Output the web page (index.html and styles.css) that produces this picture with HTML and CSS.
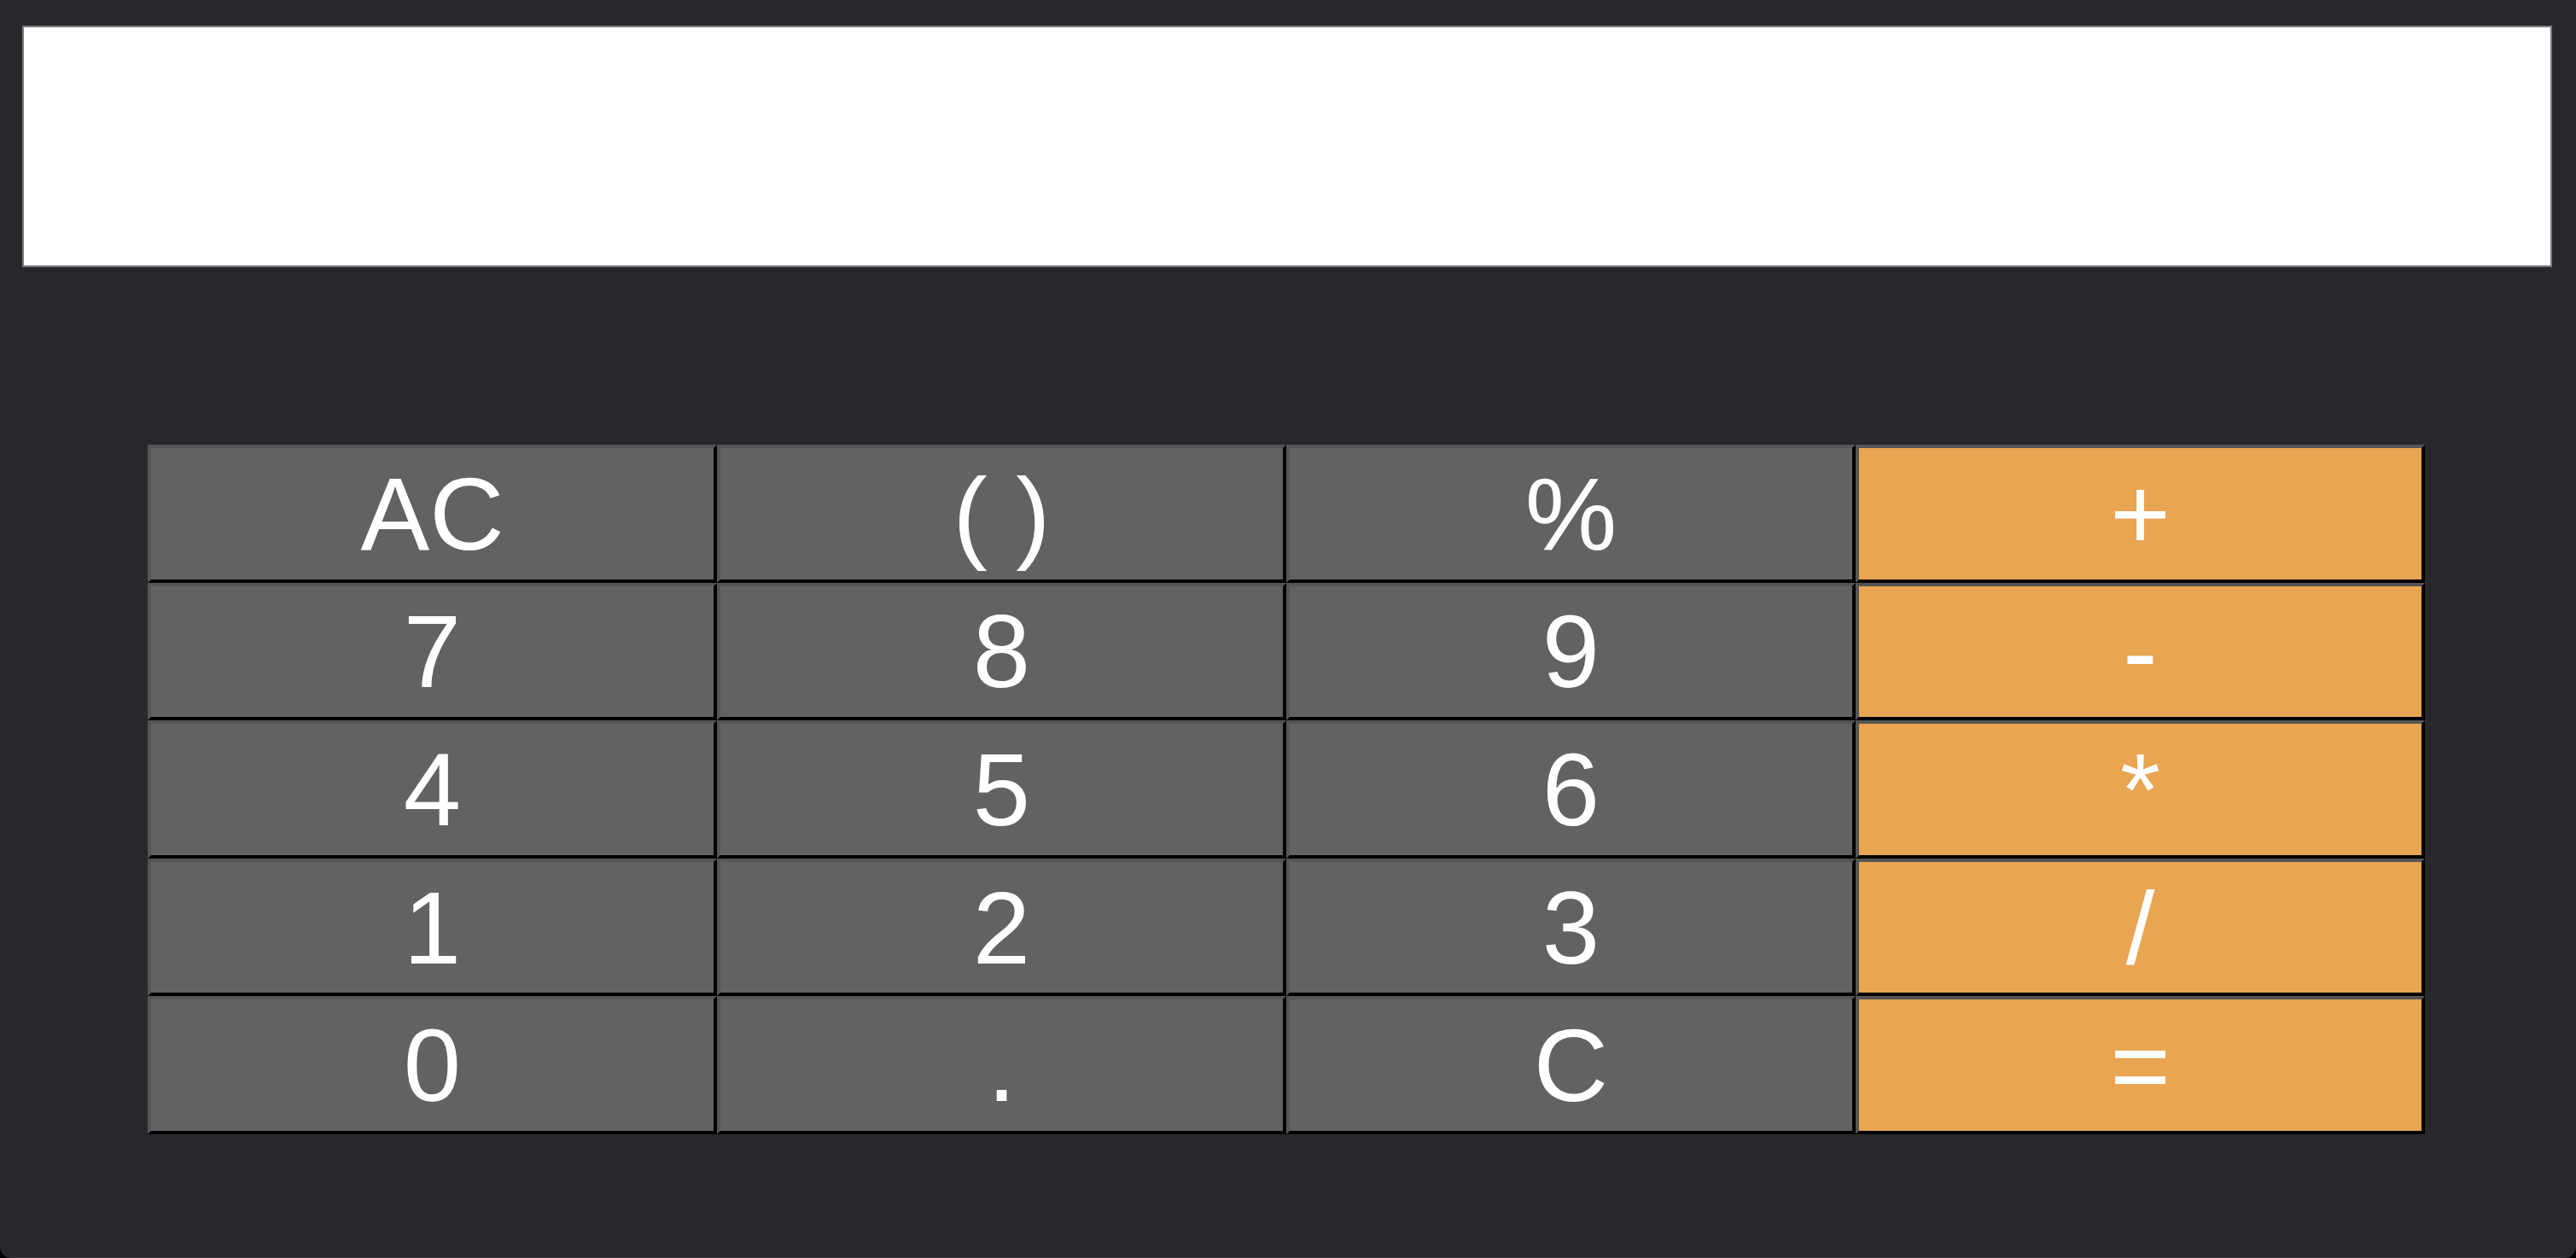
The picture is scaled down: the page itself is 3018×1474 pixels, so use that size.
FILE: index.html
```html
<!DOCTYPE html>
<html>
<head>
<meta charset="utf-8">
<title>Calculator</title>
<link rel="stylesheet" href="styles.css">
</head>
<body>
<div class="calc">
  <input class="display" type="text" value="">
  <div class="keys">
    <button class="key">AC</button>
    <button class="key">( )</button>
    <button class="key">%</button>
    <button class="key op">+</button>
    <button class="key">7</button>
    <button class="key">8</button>
    <button class="key">9</button>
    <button class="key op">-</button>
    <button class="key">4</button>
    <button class="key">5</button>
    <button class="key">6</button>
    <button class="key op">*</button>
    <button class="key">1</button>
    <button class="key">2</button>
    <button class="key">3</button>
    <button class="key op">/</button>
    <button class="key">0</button>
    <button class="key">.</button>
    <button class="key">C</button>
    <button class="key op">=</button>
  </div>
</div>
</body>
</html>
```
FILE: styles.css
```css
html {
  background: #000;
}
body {
  margin: 0;
  font-family: "Liberation Sans", Arial, sans-serif;
}
.calc {
  box-sizing: border-box;
  height: 1474px;
  background: #28272c;
  border-radius: 0 0 14px 14px;
  box-shadow: inset 0 -1px 0 rgba(120, 120, 120, 0.25);
  padding: 30px 28px 0 26px;
  display: flex;
  flex-direction: column;
  align-items: flex-start;
}
.display {
  box-sizing: border-box;
  width: 2964px;
  height: 283px;
  margin: 0;
  padding: 0 20px;
  border: 2px solid #7a7a7a;
  background: #fff;
  font-family: "Liberation Sans", Arial, sans-serif;
  font-size: 120px;
  outline: none;
}
.keys {
  align-self: center;
  margin-top: 208px;
  margin-left: -2px;
  display: grid;
  grid-template-columns: repeat(4, 667px);
  grid-template-rows: repeat(5, 161.6px);
}
.key {
  box-sizing: border-box;
  margin: 0;
  padding: 0;
  border-width: 4px;
  border-style: solid;
  border-color: #555555 #000000 #000000 #555555;
  background: #626262;
  color: #fff;
  font-family: "Liberation Sans", Arial, sans-serif;
  font-size: 121px;
  line-height: normal;
  display: flex;
  align-items: center;
  justify-content: center;
}
.key.op {
  background: #e8a552;
}
```
